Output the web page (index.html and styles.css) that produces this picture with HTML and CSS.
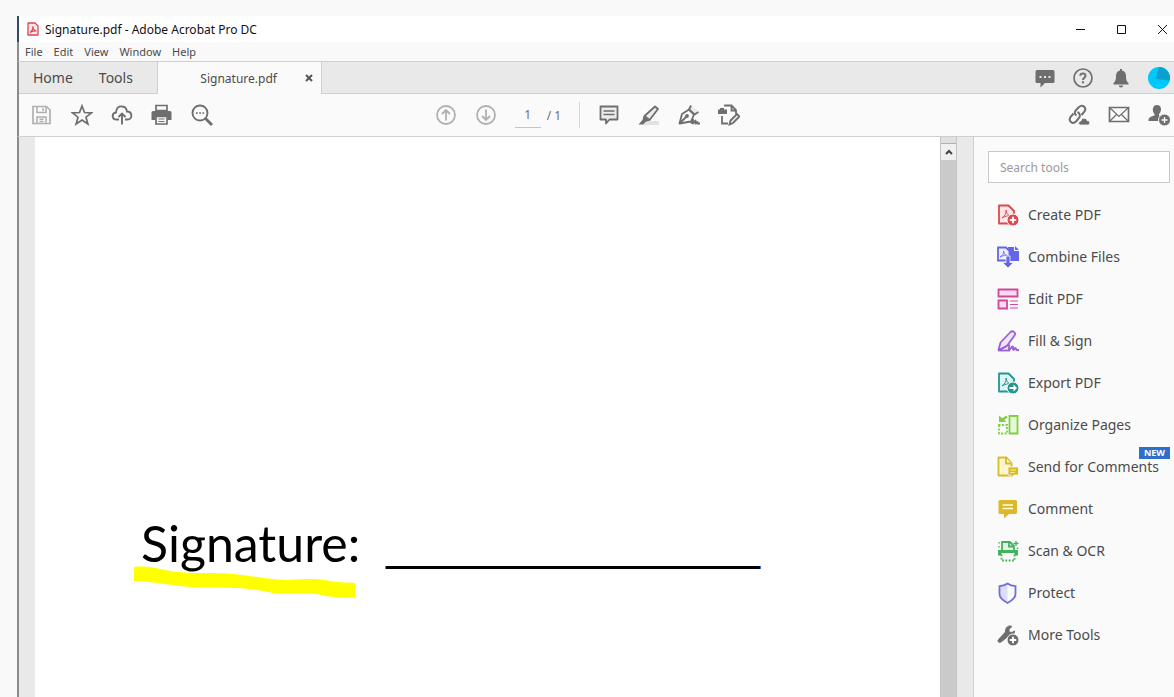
FILE: index.html
```
<!DOCTYPE html>
<html lang="en">

<head>
    <meta charset="UTF-8" />
    <title>Signature.pdf - Adobe Acrobat Pro DC</title>
    <link rel="stylesheet" href="styles.css">
</head>

<body>

    <div class="window">
        <header class="titlebar">
            <svg class="app-icon" viewBox="0 0 12 14">
                <path d="M1 1h7l3 3v9H1z" fill="#fdeced" stroke="#e0444f" stroke-width="1.3" stroke-linejoin="round" />
                <path d="M3 10.5C5 9 6.2 6.500 5.800 4.200 6 7 7.500 8.600 9.500 9 7 8.500 5 8.800 3 10.500z" fill="none" stroke="#e0444f" stroke-width="1.2" />
            </svg>
            <h1 class="window-title">Signature.pdf - Adobe Acrobat Pro DC</h1>
            <div class="window-buttons">
                <button aria-label="Minimize"><svg viewBox="0 0 11 11"><path d="M1 5.500h9" /></svg></button>
                <button aria-label="Maximize"><svg viewBox="0 0 11 11"><path d="M1.500 1.500h8v8h-8z" /></svg></button>
                <button aria-label="Close"><svg viewBox="0 0 11 11"><path d="M1 1l9 9M10 1l-9 9" /></svg></button>
            </div>
        </header>

        <nav class="menubar">
            <button>File</button>
            <button>Edit</button>
            <button>View</button>
            <button>Window</button>
            <button>Help</button>
        </nav>

        <div class="tabs">
            <div class="tabs-main">
                <button>Home</button>
                <button>Tools</button>
            </div>
            <div class="tab-file">
                <button class="tab-name">Signature.pdf</button>
                <button class="tab-close" aria-label="Close tab"><svg viewBox="0 0 8 8"><path d="M1 1l6 6M7 1L1 7" /></svg></button>
            </div>
            <div class="tabs-right">
                <button class="icon-button" aria-label="Messages">
                    <svg viewBox="0 0 22 22">
                        <path d="M3 3h16a1.500 1.500 0 0 1 1.500 1.500v10A1.500 1.500 0 0 1 19 16h-8l-4.500 4.500V16H3a1.500 1.500 0 0 1-1.500-1.500v-10A1.500 1.500 0 0 1 3 3z" fill="#6e6e6e" />
                        <path d="M5.500 9h2v2h-2zM10 9h2v2h-2zM14.500 9h2v2h-2z" fill="#e8e8e8" />
                    </svg>
                </button>
                <button class="icon-button" aria-label="Help">
                    <svg viewBox="0 0 22 22" fill="none" stroke="#6e6e6e">
                        <circle cx="11" cy="11" r="9" stroke-width="1.7" />
                        <path d="M8.300 8.800C8.500 5.500 13.800 5.800 13.500 8.800 13.300 10.700 11 10.800 11 13" stroke-width="2" />
                        <path d="M11 14.300v2" stroke-width="2.200" />
                    </svg>
                </button>
                <button class="icon-button" aria-label="Notifications">
                    <svg viewBox="0 0 22 22" fill="#6e6e6e">
                        <path d="M10 3.500V2h2v1.500c3 .5 4 3 4 5.500 0 4.500 1 5.500 2.500 7v1.500h-15V16C5 14.500 6 13.500 6 9c0-2.500 1-5 4-5.500z" />
                        <path d="M8.800 18.500h4.400a2.200 2 0 0 1-4.400 0z" />
                    </svg>
                </button>
                <button class="icon-button" aria-label="Account">
                    <svg viewBox="0 0 22 22">
                        <circle cx="11" cy="11" r="11" fill="#00c8fa" />
                        <path d="M11 0a11 11 0 0 1 11 11 11 11 0 0 1-.3 2.500L7.500 12z" fill="#0aa0cf" />
                    </svg>
                </button>
            </div>
        </div>

        <div class="toolbar">
            <div class="tool-group tool-group-file">
                <button class="icon-button" aria-label="Save">
                    <svg viewBox="0 0 22 22" fill="none" stroke="#b0b0b0" stroke-width="1.700">
                        <path d="M2 2.500h13.500l3.500 3.500v13.500H2z" />
                        <path d="M6 2.500v6h9v-6M12 4v3M6 19.500V13h9v6.500M8.500 15.300h4M8.500 17.500h4" stroke-width="1.500" />
                    </svg>
                </button>
                <button class="icon-button" aria-label="Star">
                    <svg viewBox="0 0 22 22" fill="none" stroke="#6e6e6e" stroke-width="1.700">
                        <path d="M11 2l2.500 6.500 7 .3-5.500 4.400 1.900 6.800L11 16l-5.900 4L7 13.200 1.500 8.800l7-.3z" />
                    </svg>
                </button>
                <button class="icon-button" aria-label="Upload to cloud">
                    <svg viewBox="0 0 22 22" fill="none" stroke="#6e6e6e" stroke-width="1.900">
                        <path d="M8 15.500H5.500c-5 0-5-6.500-.5-7C5 4 8 2 11 2.500c3 0 4.500 2 5 5 5.500 0 6 8 .5 8H14" />
                        <path d="M11 20.500V9.500M7.500 13L11 9.500l3.500 3.500" />
                    </svg>
                </button>
                <button class="icon-button" aria-label="Print">
                    <svg viewBox="0 0 22 22">
                        <path d="M5 1.500h11v5H5z" fill="#fafafa" stroke="#6e6e6e" stroke-width="1.700" />
                        <path d="M2 7h17a1.500 1.500 0 0 1 1.500 1.500V16h-4v-4h-12v4h-4V8.500A1.500 1.500 0 0 1 2 7z" fill="#6e6e6e" />
                        <path d="M5 12.500h11V20H5z" fill="#fafafa" stroke="#6e6e6e" stroke-width="1.700" />
                        <path d="M7.500 15h6M7.500 17.500h6" stroke="#6e6e6e" />
                    </svg>
                </button>
                <button class="icon-button" aria-label="Find">
                    <svg viewBox="0 0 22 22" fill="none" stroke="#6e6e6e">
                        <circle cx="9" cy="9" r="7.500" stroke-width="1.900" />
                        <path d="M14.500 14.500l6.500 6.500" stroke-width="2.800" />
                        <path d="M5 9h1.800M8.200 9H10M11.400 9h1.800" stroke-width="1.600" />
                    </svg>
                </button>
            </div>

            <div class="tool-group">
                <button class="icon-button" aria-label="Previous page">
                    <svg viewBox="0 0 22 22" fill="none" stroke="#b0b0b0" stroke-width="1.800">
                        <circle cx="11" cy="11" r="9" />
                        <path d="M11 16.500V6M7 10l4-4 4 4" />
                    </svg>
                </button>
                <button class="icon-button" aria-label="Next page">
                    <svg viewBox="0 0 22 22" fill="none" stroke="#b0b0b0" stroke-width="1.800">
                        <circle cx="11" cy="11" r="9" />
                        <path d="M11 5.500V16M7 12l4 4 4-4" />
                    </svg>
                </button>
                <div class="pager">
                    <input class="page-number" type="text" value="1" aria-label="Page number">
                    <span>/ 1</span>
                </div>
                <button class="icon-button" aria-label="Add comment">
                    <svg viewBox="0 0 22 22" fill="#ececec" stroke="#6e6e6e" stroke-width="1.800" stroke-linejoin="round">
                        <path d="M2.500 2.500h17v13h-8L8 19.500v-4H2.500z" />
                        <path d="M5.500 7h11M5.500 10.500h11" stroke-width="1.300" />
                    </svg>
                </button>
                <button class="icon-button" aria-label="Highlight">
                    <svg viewBox="0 0 22 22">
                        <path d="M9 17h12v4H6z" fill="#e2e2e2" />
                        <path d="M17 2.500l3 2.500-8.500 11-5-4z" fill="#ececec" stroke="#6e6e6e" stroke-width="1.800" stroke-linejoin="round" />
                        <path d="M5.500 12l6 4.500-4 1.500-2 2.500H.5l4-4.500z" fill="#6e6e6e" />
                    </svg>
                </button>
                <button class="icon-button" aria-label="Sign">
                    <svg viewBox="0 0 22 22" fill="none" stroke="#6e6e6e" stroke-width="1.800" stroke-linejoin="round">
                        <path d="M13.500 1.500l-2.500 4 5.500 5 4-3z" fill="#ececec" stroke="none" />
                        <path d="M1.500 19.500L4 10l7-4.500 5 5-3 7z" fill="#fafafa" />
                        <path d="M13 1.500l-2 4 5.500 5 4-2.500M1.500 19.500l7-7" />
                        <circle cx="9" cy="12" r="1" fill="#6e6e6e" />
                        <path d="M13 19.500l2-4v4l2.500-3v3l2-1.500v1.500H22" />
                    </svg>
                </button>
                <button class="icon-button" aria-label="Stamp">
                    <svg viewBox="0 0 22 22" fill="none" stroke="#6e6e6e" stroke-width="1.800">
                        <path d="M7 2.500v-1h6.500L18 6v4M13.500 2v4.500H18M4 12v7.500h6" />
                        <path d="M0 5.500h2V4h4v1.500h3V10H0z" fill="#6e6e6e" stroke="none" />
                        <path d="M11.500 20.500l1-4L19 10l2.500 2.500L15 19z" fill="#ececec" />
                    </svg>
                </button>
            </div>

            <div class="tool-group tool-group-share">
                <button class="icon-button" aria-label="Share link">
                    <svg viewBox="0 0 22 22" fill="none" stroke="#6e6e6e" stroke-width="2">
                        <path d="M8.500 11.500c-3-2-1.500-4.500 0-6l2.500-2.500c3.500-3 8 .5 5.500 4.500l-3 3.500" />
                        <path d="M9.500 8c3 1.500 3 4.500 1 6.500l-2.500 3c-3.500 3.500-8-.5-5.500-4.500l3-3.500" />
                        <path d="M12.500 21c-3-.5-2-4 .5-4 .5-4 5.500-3.500 6-.5 3.500 0 3.500 4.500.5 4.500z" fill="#6e6e6e" stroke="#fafafa" stroke-width=".8" />
                    </svg>
                </button>
                <button class="icon-button" aria-label="Send by email">
                    <svg viewBox="0 0 22 22" fill="none" stroke="#6e6e6e">
                        <path d="M1.500 3.500h19v14h-19z" stroke-width="1.700" />
                        <path d="M2 4l9 8.500L20 4M2 17l6.500-6.500M20 17l-6.500-6.500" stroke-width="1.200" />
                    </svg>
                </button>
                <button class="icon-button" aria-label="Share with others">
                    <svg viewBox="0 0 22 22">
                        <path d="M9 1c5 0 5 6.500 2 9v1.500l3 1.500-2 4H.5c0-3 1-4 6-5.500V10C4 7.500 4 1 9 1z" fill="#6e6e6e" />
                        <circle cx="16.500" cy="16" r="6" fill="#6e6e6e" stroke="#fafafa" />
                        <path d="M13.500 16h6M16.500 13v6" stroke="#fafafa" stroke-width="1.400" />
                    </svg>
                </button>
            </div>
        </div>

        <main class="workspace">
            <section class="document">
                <p class="sign-line">
                    <span class="sign-label">Signature:
                        <svg class="marker" viewBox="0 0 222 34">
                            <path d="M0 1C20-1 28 5 44 6 62 8 82 6 100 8c20 2 36 6 52 6 20-1 30-2 44 1 10 2 16 1 25 2v14c-14 1-28 0-38-3-16-2-26 1-44-1-14-3-24-5-42-5-22-1-44 0-58-3C20 17 12 15 0 15z" fill="#ffff00" />
                        </svg>
                    </span>
                    <span class="sign-blank">______________</span>
                </p>
            </section>
            <div class="scrollbar">
                <div class="splitter"></div>
                <button class="scroll-up" aria-label="Scroll up"><svg viewBox="0 0 8 6"><path d="M1 5l3-3 3 3" /></svg></button>
                <div class="scroll-thumb"></div>
            </div>
            <aside class="tools-panel">
                <input class="search" type="text" placeholder="Search tools" aria-label="Search tools">
                <ul class="tools">
                    <li><a href="#">
                        <svg viewBox="0 0 22 22">
                            <path d="M2 1.500h9.500L17 7v12.500H2z" fill="#fce6e7" stroke="#dc4850" stroke-width="1.800" stroke-linejoin="round" />
                            <path d="M5 14c3-2 4.500-5 4-8 .5 4 2.500 5.500 5 6-3-.5-6 0-9 2z" fill="none" stroke="#dc4850" />
                            <circle cx="16" cy="16" r="6" fill="#dc4850" stroke="#fafafa" />
                            <path d="M12.800 16h6.400M16 12.800v6.400" stroke="#fff" stroke-width="1.800" />
                        </svg>
                        <span>Create PDF</span></a></li>
                    <li><a href="#">
                        <svg viewBox="0 0 22 22">
                            <path d="M11 1h6v4h5v10h-9z" fill="#6464e6" />
                            <path d="M18 0l4 4h-4z" fill="#6464e6" />
                            <path d="M1 1.500h8L12.500 5v9.500H1z" fill="#ededfc" stroke="#6464e6" stroke-width="1.800" />
                            <path d="M3 11c3-1.500 4-4 3.500-6 .5 3 2 4.500 4 4.500C8 9 6 9.500 3 11z" fill="none" stroke="#6464e6" stroke-width=".8" />
                            <path d="M9 10h4v6.500h3.500L11 22l-5.500-5.500H9z" fill="#6464e6" stroke="#fafafa" stroke-width=".8" />
                        </svg>
                        <span>Combine Files</span></a></li>
                    <li><a href="#">
                        <svg viewBox="0 0 22 22" fill="#fadcee" stroke="#d0489a" stroke-width="1.800">
                            <path d="M1.500 1.500h19v7h-19zM1.500 12.500h8.500v8H1.500z" />
                            <path d="M13 13h8M13 16.500h8M13 20h8" stroke-width="1.200" />
                        </svg>
                        <span>Edit PDF</span></a></li>
                    <li><a href="#">
                        <svg viewBox="0 0 22 22" fill="none" stroke="#9a60dc" stroke-width="1.800" stroke-linejoin="round">
                            <path d="M1.500 20l2-7.500L13.500 2c2.500-2 6 1 4 3.500L9.500 16.500z" fill="#f0e5fb" />
                            <path d="M1.500 20c5-1 9-5.500 10.500-5 1.500.5-1.500 4.500 0 5 1.500 0 2.500-3.500 3.500-3.500 1.500 0-.5 3 1 3.500 1 0 1-2 2-2s0 2 1.500 2H22" />
                            <path d="M1 20.500h12" />
                        </svg>
                        <span>Fill &amp; Sign</span></a></li>
                    <li><a href="#">
                        <svg viewBox="0 0 22 22">
                            <path d="M2 1.500h9.500L17 7v12.500H2z" fill="#dff5f4" stroke="#269490" stroke-width="1.800" stroke-linejoin="round" />
                            <path d="M5 14c3-2 4.500-5 4-8 .5 4 2.500 5.500 5 6-3-.5-6 0-9 2z" fill="none" stroke="#269490" />
                            <circle cx="16" cy="16" r="6" fill="#269490" stroke="#fafafa" />
                            <path d="M12.500 15h4v-2.500L20 16l-3.500 3.500V17h-4z" fill="#fff" />
                        </svg>
                        <span>Export PDF</span></a></li>
                    <li><a href="#">
                        <svg viewBox="0 0 22 22" fill="none" stroke="#7fcf42" stroke-width="1.800">
                            <path d="M12.500 2h8v17.500h-8z" fill="#e5f7d7" />
                            <path d="M2 11v8.500h8V11z" stroke-dasharray="2 1.500" />
                            <path d="M10 2.500L5 6" stroke-width="2.400" />
                            <path d="M2 1.500v6.500h7.500z" fill="#7fcf42" stroke="none" />
                        </svg>
                        <span>Organize Pages</span></a></li>
                    <li><a href="#">
                        <svg viewBox="0 0 22 22" fill="#fbf5d2" stroke="#dbbb24" stroke-width="1.800" stroke-linejoin="round">
                            <path d="M1.500 1.500h8L14.500 7v12.500h-13z" />
                            <path d="M9 2v5.500h5.500" />
                            <path d="M11 11h10.500v8H17l-3 3v-3h-3z" fill="#dbbb24" stroke="#fafafa" stroke-width=".8" />
                            <path d="M13.500 14h5.500M13.500 16.500h4" stroke="#fff3a0" stroke-width="1" />
                        </svg>
                        <span>Send for Comments</span></a><span class="badge">NEW</span></li>
                    <li><a href="#">
                        <svg viewBox="0 0 22 22">
                            <path d="M3 2h15.500A1.500 1.500 0 0 1 20 3.500v11a1.500 1.500 0 0 1-1.500 1.500H12l-5 4.500V16H3a1.500 1.500 0 0 1-1.500-1.500v-11A1.500 1.500 0 0 1 3 2z" fill="#dbb92a" />
                            <path d="M5.500 7h10.500M5.500 10.500h10.500" stroke="#fffbe0" stroke-width="1.600" />
                        </svg>
                        <span>Comment</span></a></li>
                    <li><a href="#">
                        <svg viewBox="0 0 22 22" fill="none" stroke="#42b35c" stroke-width="1.800">
                            <path d="M5 10V2h8l4 4v4" fill="#dff5e4" />
                            <path d="M12 2v4.500h5" />
                            <path d="M1 10h20v5.500h-3.500V13h-13v2.500H1z" fill="#42b35c" stroke="none" />
                            <path d="M4.500 14.500v6h13v-6" stroke-dasharray="1.800 1.500" />
                            <path d="M19 1v5M16.500 3.500h5M2 2v1.500M2 6v1.500M20.500 7.500V9" stroke-width="1.300" />
                        </svg>
                        <span>Scan &amp; OCR</span></a></li>
                    <li><a href="#">
                        <svg viewBox="0 0 22 22">
                            <path d="M10.500 1.500C13 3.300 15.500 4 18.500 4.200V12c0 4-3.500 6.500-8 9-4.500-2.500-8-5-8-9V4.200C5.500 4 8 3.300 10.500 1.500z" fill="#fafafa" />
                            <path d="M10.500 1.500V21c-4.500-2.500-8-5-8-9V4.200C5.500 4 8 3.300 10.500 1.500z" fill="#dedefa" />
                            <path d="M10.500 1.500C13 3.300 15.500 4 18.500 4.200V12c0 4-3.500 6.500-8 9-4.500-2.500-8-5-8-9V4.200C5.500 4 8 3.300 10.500 1.500z" fill="none" stroke="#6e6ee0" stroke-width="1.800" />
                        </svg>
                        <span>Protect</span></a></li>
                    <li><a href="#">
                        <svg viewBox="0 0 22 22">
                            <path d="M1.500 15.500c-1.500 1.500.5 4 2.500 2.500l7.500-6c3 1 6-1 6-5L15 8.500 12 8V5l3-2.500C11.500.5 8 4 8.500 8z" fill="#6e6e6e" stroke="#6e6e6e" stroke-linejoin="round" />
                            <circle cx="16" cy="16" r="6" fill="#6e6e6e" stroke="#fafafa" />
                            <path d="M12.800 16h6.400M16 12.800v6.400" stroke="#fff" stroke-width="1.800" />
                        </svg>
                        <span>More Tools</span></a></li>
                </ul>
            </aside>
        </main>
    </div>

</body>

</html>
```
FILE: styles.css
```
* {
    box-sizing: border-box;
}

body {
    margin: 0;
    padding: 16px 0 0 17px;
    height: 100vh;
    overflow: hidden;
    background-color: #f9f9f9;
    color: #4b4b4b;
    font-family: "Noto Sans", sans-serif;
    font-size: 14px;
}

button {
    border: none;
    padding: 0;
    background: none;
    color: inherit;
    font: inherit;
    cursor: pointer;
}

svg {
    display: block;
}

.window {
    display: flex;
    flex-direction: column;
    height: 100%;
}

/* title bar */
.titlebar {
    display: flex;
    align-items: center;
    height: 26px;
    padding: 0 6px 0 8px;
    border-left: 2px solid #2f4a6b;
    background-color: #fff;
}

.app-icon {
    width: 12px;
    height: 14px;
}

.window-title {
    margin: 0 0 0 6px;
    color: #111;
    font-size: 12px;
    font-weight: normal;
}

.window-buttons {
    display: flex;
    gap: 30px;
    margin-left: auto;
}

.window-buttons svg {
    width: 11px;
    height: 11px;
    fill: none;
    stroke: #111;
}

/* menu */
.menubar {
    display: flex;
    gap: 11px;
    height: 19px;
    padding: 0 0 1px 6px;
    border-left: 2px solid #8c8c8c;
    font-size: 11px;
}

/* tabs */
.tabs {
    display: flex;
    height: 33px;
    border-left: 2px solid #8c8c8c;
    border-top: 1px solid #cfcfcf;
    background-color: #e9e9e9;
}

.tabs-main {
    display: flex;
    gap: 26px;
    padding: 0 24px 0 14px;
    border-right: 1px solid #cfcfcf;
    border-bottom: 1px solid #cfcfcf;
}

.tab-file {
    display: flex;
    align-items: center;
    justify-content: flex-end;
    gap: 28px;
    width: 164px;
    padding-right: 8px;
    border-right: 1px solid #cfcfcf;
    background-color: #fafafa;
    font-size: 12px;
}

.tab-close svg {
    width: 8px;
    height: 8px;
    fill: none;
    stroke: #555;
    stroke-width: 2;
}

.tabs-right {
    display: flex;
    flex: 1;
    align-items: center;
    justify-content: flex-end;
    gap: 16px;
    padding-right: 4px;
    border-bottom: 1px solid #cfcfcf;
}

.icon-button svg {
    width: 22px;
    height: 22px;
}

/* toolbar */
.toolbar {
    display: flex;
    align-items: center;
    height: 43px;
    padding: 0 4px 0 12px;
    border-left: 2px solid #8c8c8c;
    border-bottom: 1px solid #cfcfcf;
    background-color: #fafafa;
}

.tool-group {
    display: flex;
    align-items: center;
    gap: 18px;
}

.tool-group-file {
    width: 35%;
    margin-right: 5px;
}

.tool-group-share {
    margin-left: auto;
}

.pager {
    display: flex;
    align-items: center;
    gap: 6px;
    height: 26px;
    padding-right: 18px;
    border-right: 1px solid #d6d6d6;
    color: #6e6e6e;
    font-size: 12px;
}

.page-number {
    width: 26px;
    height: 26px;
    padding: 0;
    border: none;
    border-bottom: 1px solid #c4c4c4;
    background: none;
    color: inherit;
    font: inherit;
    text-align: center;
}

/* document and scrollbar */
.workspace {
    display: flex;
    flex: 1;
    min-height: 0;
    padding-left: 16px;
    border-left: 2px solid #8c8c8c;
    background-color: #e9e9e9;
}

.document {
    flex: 1;
    padding: 376px 0 0 106px;
    background-color: #fff;
}

.sign-line {
    display: flex;
    gap: 26px;
    margin: 0;
    color: #000;
    font-family: Lato, sans-serif;
    font-size: 50px;
    line-height: 60px;
    white-space: nowrap;
}

.sign-label {
    position: relative;
}

.sign-blank {
    font-family: "Liberation Sans", sans-serif;
    font-size: 48px;
}

.marker {
    position: absolute;
    left: -7px;
    top: 53px;
    width: 222px;
    height: 34px;
}

.scrollbar {
    display: flex;
    flex-direction: column;
    width: 17px;
    margin-right: 16px;
    border-left: 1px solid #c4c4c4;
    border-right: 1px solid #c4c4c4;
    background-color: #f0f0f0;
}

.splitter {
    height: 7px;
    border-bottom: 1px solid #b0b0b0;
    background-color: #e0e0e0;
}

.scroll-up {
    height: 16px;
}

.scroll-up svg {
    width: 8px;
    height: 6px;
    margin: 0 auto;
    fill: none;
    stroke: #444;
    stroke-width: 2;
}

.scroll-thumb {
    flex: 1;
    background-color: #cacaca;
}

/* tools panel */
.tools-panel {
    width: 201px;
    padding: 14px 4px 0 14px;
    border-left: 1px solid #cfcfcf;
    background-color: #fafafa;
}

.search {
    width: 100%;
    height: 32px;
    padding: 0 11px;
    border: 1px solid #c8c8c8;
    background-color: #fff;
    font: inherit;
    font-size: 12px;
}

.search::placeholder {
    color: #9a9a9a;
}

.tools {
    margin: 11px 0 0;
    padding: 0;
    list-style: none;
}

.tools li {
    position: relative;
}

.tools a {
    display: flex;
    align-items: center;
    gap: 9px;
    height: 42px;
    padding-left: 9px;
    color: inherit;
    line-height: 14px;
    text-decoration: none;
    white-space: nowrap;
}

.tools svg {
    width: 22px;
    height: 22px;
}

.badge {
    position: absolute;
    top: 1px;
    right: 0;
    padding: 0 5px;
    background-color: #2d6fcb;
    color: #fff;
    font-size: 9px;
    font-weight: bold;
    line-height: 12px;
}
```
